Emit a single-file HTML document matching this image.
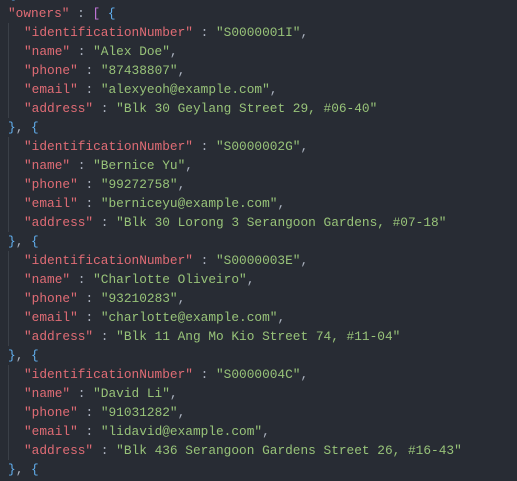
<!DOCTYPE html>
<html><head><style>
html,body{margin:0;padding:0;background:#282c34;width:517px;height:481px;overflow:hidden}
.c{position:absolute;left:8px;top:-15px;font-family:"Liberation Mono",monospace;font-size:12.8px;line-height:19px;color:#abb2bf}
.k{color:#e06c75}.s{color:#98c379}.p{color:#c678dd}.b{color:#61afef}
.l{height:19px;white-space:pre}
.i{padding-left:16px}
.g{position:absolute;left:8px;width:1px;background:#3b4048}
</style></head><body>
<div class="g" style="top:23px;height:95px"></div>
<div class="g" style="top:137px;height:95px"></div>
<div class="g" style="top:251px;height:95px"></div>
<div class="g" style="top:365px;height:95px"></div>
<div class="c"><div class="l"><span class="b">{</span></div><div class="l"><span class="k">"owners"</span> : <span class="p">[</span> <span class="b">{</span></div><div class="l i"><span class="k">"identificationNumber"</span> : <span class="s">"S0000001I"</span>,</div><div class="l i"><span class="k">"name"</span> : <span class="s">"Alex Doe"</span>,</div><div class="l i"><span class="k">"phone"</span> : <span class="s">"87438807"</span>,</div><div class="l i"><span class="k">"email"</span> : <span class="s">"alexyeoh@example.com"</span>,</div><div class="l i"><span class="k">"address"</span> : <span class="s">"Blk 30 Geylang Street 29, #06-40"</span></div><div class="l"><span class="b">}</span>, <span class="b">{</span></div><div class="l i"><span class="k">"identificationNumber"</span> : <span class="s">"S0000002G"</span>,</div><div class="l i"><span class="k">"name"</span> : <span class="s">"Bernice Yu"</span>,</div><div class="l i"><span class="k">"phone"</span> : <span class="s">"99272758"</span>,</div><div class="l i"><span class="k">"email"</span> : <span class="s">"berniceyu@example.com"</span>,</div><div class="l i"><span class="k">"address"</span> : <span class="s">"Blk 30 Lorong 3 Serangoon Gardens, #07-18"</span></div><div class="l"><span class="b">}</span>, <span class="b">{</span></div><div class="l i"><span class="k">"identificationNumber"</span> : <span class="s">"S0000003E"</span>,</div><div class="l i"><span class="k">"name"</span> : <span class="s">"Charlotte Oliveiro"</span>,</div><div class="l i"><span class="k">"phone"</span> : <span class="s">"93210283"</span>,</div><div class="l i"><span class="k">"email"</span> : <span class="s">"charlotte@example.com"</span>,</div><div class="l i"><span class="k">"address"</span> : <span class="s">"Blk 11 Ang Mo Kio Street 74, #11-04"</span></div><div class="l"><span class="b">}</span>, <span class="b">{</span></div><div class="l i"><span class="k">"identificationNumber"</span> : <span class="s">"S0000004C"</span>,</div><div class="l i"><span class="k">"name"</span> : <span class="s">"David Li"</span>,</div><div class="l i"><span class="k">"phone"</span> : <span class="s">"91031282"</span>,</div><div class="l i"><span class="k">"email"</span> : <span class="s">"lidavid@example.com"</span>,</div><div class="l i"><span class="k">"address"</span> : <span class="s">"Blk 436 Serangoon Gardens Street 26, #16-43"</span></div><div class="l"><span class="b">}</span>, <span class="b">{</span></div></div>
</body></html>
